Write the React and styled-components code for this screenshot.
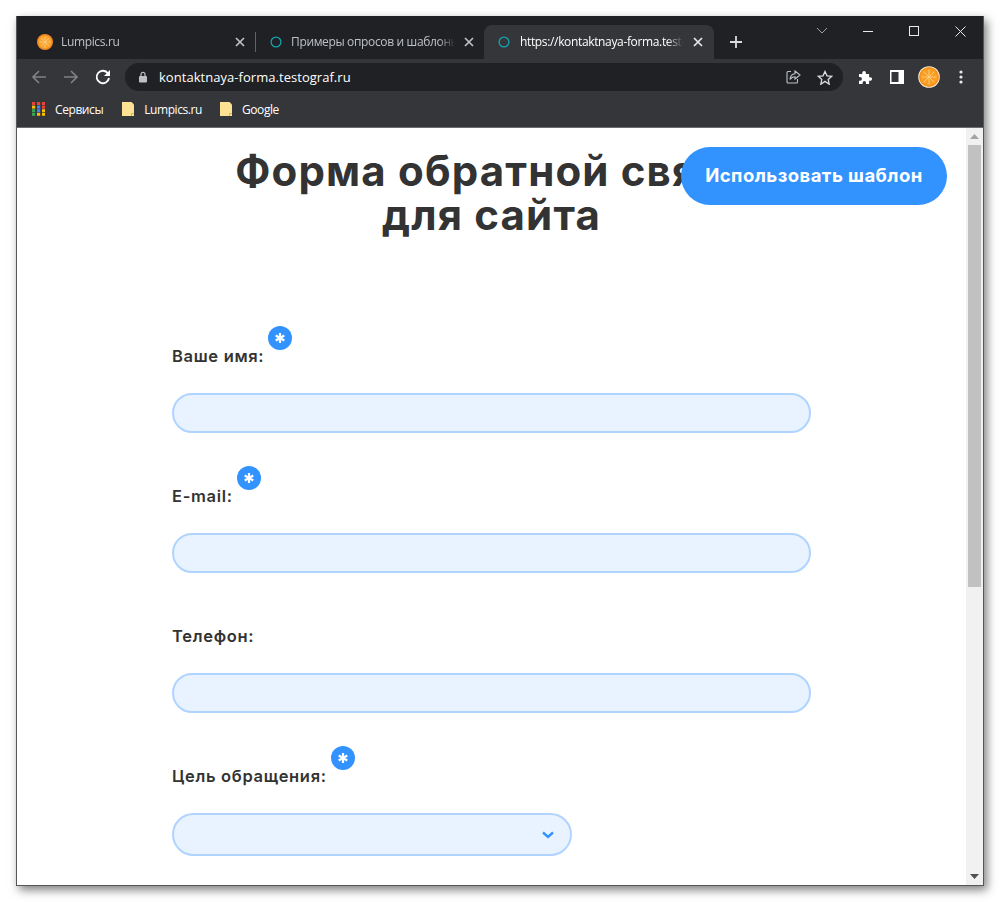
import React from "react";
import styled, { createGlobalStyle } from "styled-components";

const Global = createGlobalStyle`
  html, body { margin: 0; padding: 0; background: #fff; }
  body { height: 902px; overflow: hidden; font-family: "Open Sans", "Liberation Sans", sans-serif; }
  * { box-sizing: border-box; }
`;

const Desk = styled.div`
  width: 1000px;
  height: 902px;
  padding: 16px 16px 16px 16px;
`;
const Win = styled.div`
  width: 968px;
  height: 870px;
  display: flex;
  flex-direction: column;
  background: #fff;
  overflow: hidden;
  border: 1px solid #55565a;
  border-top: 0;
  box-shadow: 3px 4px 9px rgba(0, 0, 0, 0.5);
`;
const TabStrip = styled.div`
  height: 43px;
  flex: none;
  background: #202124;
  display: flex;
  align-items: flex-end;
  padding-left: 8px;
  position: relative;
`;
const Tab = styled.div`
  width: ${p => p.$w}px;
  height: 34px;
  display: flex;
  align-items: center;
  gap: ${p => p.$gap || 8}px;
  padding: 0 ${p => p.$pr}px 0 ${p => p.$pl}px;
  border-radius: 8px 8px 0 0;
  background: ${p => (p.$active ? "#35363a" : "transparent")};
  color: ${p => (p.$active ? "#fff" : "#bdc1c6")};
`;
const TabDivider = styled.div`
  width: 1px;
  height: 20px;
  background: #5f6368;
  margin-bottom: 7px;
  flex: none;
`;
const TabTitle = styled.div`
  flex: 1;
  min-width: 0;
  font-size: 12px;
  line-height: 16px;
  letter-spacing: -0.35px;
  white-space: nowrap;
  overflow: hidden;
  -webkit-mask-image: linear-gradient(to right, #000 calc(100% - 16px), transparent);
  mask-image: linear-gradient(to right, #000 calc(100% - 16px), transparent);
`;
const Close = styled.svg`
  width: 10px;
  height: 10px;
  flex: none;
  stroke: ${p => (p.$active ? "#e8eaed" : "#bdc1c6")};
  stroke-width: 1.7;
`;
const NewTab = styled.svg`
  width: 14px;
  height: 14px;
  margin: 0 0 10px 15px;
  stroke: #dadce0;
  stroke-width: 1.8;
  flex: none;
`;
const WinControls = styled.div`
  position: absolute;
  right: 0;
  top: 0;
  display: flex;
`;
const WinBtn = styled.div`
  width: 46px;
  height: 30px;
  display: flex;
  align-items: center;
  justify-content: center;
  svg { stroke: #e8eaed; fill: none; stroke-width: 1; }
`;
const Toolbar = styled.div`
  height: 37px;
  flex: none;
  background: #35363a;
  display: flex;
  align-items: flex-start;
  padding-top: 4px;
`;
const NavBtn = styled.div`
  width: 32px;
  height: 28px;
  flex: none;
  display: flex;
  align-items: center;
  justify-content: center;
`;
const NavGroup = styled.div`
  display: flex;
  padding-left: 6px;
  margin-right: 6px;
`;
const Omni = styled.div`
  width: 718px;
  height: 28px;
  flex: none;
  border-radius: 14px;
  background: #202124;
  display: flex;
  align-items: center;
  padding: 0 2px 0 13px;
`;
const UrlText = styled.div`
  flex: 1;
  margin-left: 11px;
  font-size: 13px;
  color: #fff;
  letter-spacing: 0.04px;
`;
const OmniBtn = styled.div`
  width: 32px;
  height: 28px;
  display: flex;
  align-items: center;
  justify-content: center;
`;
const ToolRight = styled.div`
  display: flex;
  margin-left: 6px;
`;
const Bookmarks = styled.div`
  height: 31px;
  flex: none;
  background: #35363a;
  display: flex;
  align-items: center;
  padding: 0 0 5px 15px;
`;
const Bookmark = styled.div`
  display: flex;
  align-items: center;
  gap: ${p => p.$gap}px;
  margin-right: ${p => p.$mr}px;
  font-size: 12px;
  letter-spacing: -0.42px;
  color: #fff;
`;
const Rule = styled.div`
  height: 1px;
  flex: none;
  background: #6b6c70;
`;
const Viewport = styled.div`
  flex: 1;
  min-height: 0;
  display: flex;
  position: relative;
`;
const Page = styled.div`
  flex: 1;
  min-width: 0;
  overflow: hidden;
  font-family: Inter, "Liberation Sans", sans-serif;
`;
const Title = styled.h1`
  margin: 0;
  padding-top: 21px;
  text-align: center;
  font-size: 42px;
  line-height: 44px;
  font-weight: 700;
  letter-spacing: 1.15px;
  color: #333333;
  white-space: pre-line;
`;
const Form = styled.div`
  padding: 88px 0 0 155px;
`;
const Field = styled.div`
  height: 140px;
  display: flex;
  flex-direction: column;
`;
const LabelRow = styled.div`
  height: 68px;
  padding-top: 6px;
  display: flex;
  align-items: flex-start;
`;
const Label = styled.div`
  margin-top: 15px;
  font-size: 16.5px;
  line-height: 20px;
  font-weight: 600;
  letter-spacing: 0.68px;
  color: #333333;
`;
const Badge = styled.div`
  width: 24px;
  height: 24px;
  margin: -5px 0 0 4px;
  border-radius: 50%;
  background: #3293ff;
  display: flex;
  align-items: center;
  justify-content: center;
`;
const Input = styled.div`
  width: 639px;
  height: 40px;
  border: 2px solid #b0d4ff;
  border-radius: 20px;
  background: #e8f3ff;
`;
const Select = styled.div`
  width: 400px;
  height: 43px;
  border: 2px solid #b0d4ff;
  border-radius: 21.5px;
  background: #e8f3ff;
  display: flex;
  align-items: center;
  justify-content: flex-end;
  padding-right: 16px;
`;
const UseBtn = styled.div`
  position: absolute;
  left: 664px;
  top: 19px;
  width: 266px;
  height: 58px;
  border-radius: 29px;
  background: #3293ff;
  color: #fff;
  display: flex;
  align-items: center;
  justify-content: center;
  padding-bottom: 2px;
  font-family: Inter, "Liberation Sans", sans-serif;
  font-size: 18.5px;
  font-weight: 700;
  letter-spacing: 0.45px;
`;
const Scrollbar = styled.div`
  width: 17px;
  flex: none;
  background: #f1f1f1;
  display: flex;
  flex-direction: column;
  align-items: center;
`;
const ScrollArrow = styled.div`
  height: 17px;
  width: 100%;
  flex: none;
  display: flex;
  align-items: center;
  justify-content: center;
`;
const ScrollThumb = styled.div`
  width: 13px;
  height: 442px;
  flex: none;
  background: #c1c1c1;
`;
const ScrollSpace = styled.div`
  flex: 1;
`;

const Orange = ({ size = 16 }) => (
  <svg width={size} height={size} viewBox="0 0 16 16" style={{ flex: "none" }}>
    <circle cx="8" cy="8" r="8" fill="#f08a24" />
    <circle cx="8" cy="8" r="6.500" fill="#fba42e" />
    <g stroke="#fcca7e" strokeWidth=".9">
      <path d="M8 2.500v11M2.500 8h11M4.100 4.100l7.800 7.800M11.900 4.100l-7.800 7.800" />
    </g>
  </svg>
);
const Ring = () => (
  <svg width="12" height="12" viewBox="0 0 12 12" style={{ flex: "none" }}>
    <circle cx="6" cy="6" r="4.900" fill="none" stroke="#14a3b0" strokeWidth="1.300" />
  </svg>
);
const X = ({ active }) => (
  <Close $active={active} viewBox="0 0 10 10"><path d="M1 1l8 8M9 1l-8 8" /></Close>
);
const Folder = () => (
  <svg width="12" height="14" viewBox="0 0 12 14">
    <path d="M0 0h9.500l2.500 2.500V14H0z" fill="#fde293" />
    <path d="M9.500 14v-2.500H12" fill="none" stroke="#d9b44a" strokeWidth="1" />
  </svg>
);
const AppsGrid = () => (
  <svg width="13" height="14" viewBox="0 0 13 14">
    {[
      ["#ea4335", "#ea4335", "#ea4335"],
      ["#fbbc04", "#4285f4", "#ea4335"],
      ["#34a853", "#4285f4", "#fbbc04"],
      ["#34a853", "#fbbc04", "#fbbc04"],
    ].map((r, y) =>
      r.map((c, x) => <rect key={`${x}-${y}`} x={x * 5} y={y * 3.6} width="3.200" height="3" fill={c} />)
    )}
  </svg>
);
const Star = () => (
  <svg width="12" height="12" viewBox="0 0 12 12">
    <path d="M6 1v10M1.700 3.500l8.600 5M10.300 3.500l-8.600 5" stroke="#fff" strokeWidth="2.200" />
  </svg>
);

const fields = [
  { label: "Ваше имя:", req: true },
  { label: "E-mail:", req: true },
  { label: "Телефон:" },
  { label: "Цель обращения:", req: true, select: true },
];

export default function App() {
  return (
    <Desk>
      <Global />
      <Win>
        <TabStrip>
          <Tab $w={230} $pl={12} $pr={10}>
            <Orange />
            <TabTitle>Lumpics.ru</TabTitle>
            <X />
          </Tab>
          <TabDivider />
          <Tab $w={228} $pl={14} $pr={10} $gap={9}>
            <Ring />
            <TabTitle>Примеры опросов и шаблоны анкет</TabTitle>
            <X />
          </Tab>
          <Tab $w={230} $pl={14} $pr={11} $gap={10} $active>
            <Ring />
            <TabTitle>https://kontaktnaya-forma.testograf.ru</TabTitle>
            <X active />
          </Tab>
          <NewTab viewBox="0 0 14 14"><path d="M7 1v12M1 7h12" /></NewTab>
          <WinControls>
            <WinBtn>
              <svg width="12" height="8" viewBox="0 0 12 8" style={{ stroke: "#9aa0a6" }}><path d="M1 1l5 5 5-5" /></svg>
            </WinBtn>
            <WinBtn><svg width="10" height="10" viewBox="0 0 10 10"><path d="M0 5.500h10" /></svg></WinBtn>
            <WinBtn><svg width="10" height="10" viewBox="0 0 10 10"><rect x=".5" y=".5" width="9" height="9" /></svg></WinBtn>
            <WinBtn><svg width="11" height="11" viewBox="0 0 11 11"><path d="M.5.5l10 10M10.500.5l-10 10" /></svg></WinBtn>
          </WinControls>
        </TabStrip>
        <Toolbar>
          <NavGroup>
            <NavBtn>
              <svg width="16" height="16" viewBox="0 0 16 16" fill="none" stroke="#7f8184" strokeWidth="1.700"><path d="M15 8H2M8 2L2 8l6 6" /></svg>
            </NavBtn>
            <NavBtn>
              <svg width="16" height="16" viewBox="0 0 16 16" fill="none" stroke="#7f8184" strokeWidth="1.700"><path d="M1 8h13M8 2l6 6-6 6" /></svg>
            </NavBtn>
            <NavBtn>
              <svg width="16" height="16" viewBox="0 0 16 16" fill="none"><path d="M13 4.500A6.200 6.200 0 1 0 14 9" stroke="#fff" strokeWidth="1.900" /><path d="M15 1v6H9z" fill="#fff" /></svg>
            </NavBtn>
          </NavGroup>
          <Omni>
            <svg width="10" height="12" viewBox="0 0 10 12" style={{ flex: "none" }}>
              <rect x="1" y="5" width="8" height="6.500" rx="1" fill="#bdc1c6" />
              <path d="M3 5V3.400a2 2 0 0 1 4 0V5" fill="none" stroke="#bdc1c6" strokeWidth="1.200" />
            </svg>
            <UrlText>kontaktnaya-forma.testograf.ru</UrlText>
            <OmniBtn>
              <svg width="15" height="14" viewBox="0 0 15 14" fill="none" stroke="#bdc1c6" strokeWidth="1.100"><path d="M5 1.500H2a1 1 0 0 0-1 1v9.500a1 1 0 0 0 1 1h8.500a1 1 0 0 0 1-1V9" /><path d="M9 1l5 4-5 4V6.700C6.800 6.700 5.200 7.500 4 9.500c.2-3 2-5.500 5-5.800z" /></svg>
            </OmniBtn>
            <OmniBtn>
              <svg width="16" height="15" viewBox="0 0 16 15" fill="none" stroke="#dadce0" strokeWidth="1.300"><path d="M8 1.400l2 4.400 4.700.5-3.500 3.200 1 4.700L8 11.400l-4.200 2.800 1-4.700L1.300 6.300 6 5.800z" /></svg>
            </OmniBtn>
          </Omni>
          <ToolRight>
            <NavBtn>
              <svg width="15" height="15" viewBox="0 0 15 15" fill="#fff"><path d="M1 4h3.300V2.800a1.800 1.800 0 0 1 3.600 0V4h3.200v3.200h1.200a1.800 1.800 0 0 1 0 3.600h-1.200V14H8v-1.300a1.700 1.700 0 0 0-3.400 0V14H1v-3.300h1.100a1.800 1.800 0 0 0 0-3.600H1z" /></svg>
            </NavBtn>
            <NavBtn>
              <svg width="14" height="14" viewBox="0 0 14 14"><rect width="14" height="14" fill="#fff" /><rect x="1.500" y="2" width="7" height="10" fill="#35363a" /></svg>
            </NavBtn>
            <NavBtn>
              <svg width="22" height="22" viewBox="0 0 22 22">
                <circle cx="11" cy="11" r="10.800" fill="#fff2dc" />
                <circle cx="11" cy="11" r="10" fill="#f5901c" />
                <circle cx="11" cy="11" r="8.400" fill="#fb9f22" />
                <g stroke="#fdd08a" strokeWidth=".9"><path d="M11 3.500v15M3.500 11h15M5.700 5.700l10.600 10.600M16.300 5.700L5.700 16.300" /></g>
              </svg>
            </NavBtn>
            <NavBtn>
              <svg width="4" height="14" viewBox="0 0 4 14" fill="#e8eaed"><circle cx="2" cy="2" r="1.600" /><circle cx="2" cy="7" r="1.600" /><circle cx="2" cy="12" r="1.600" /></svg>
            </NavBtn>
          </ToolRight>
        </Toolbar>
        <Bookmarks>
          <Bookmark $gap={10} $mr={19}><AppsGrid />Сервисы</Bookmark>
          <Bookmark $gap={10} $mr={18}><Folder />Lumpics.ru</Bookmark>
          <Bookmark $gap={10} $mr={0}><Folder />Google</Bookmark>
        </Bookmarks>
        <Rule />
        <Viewport>
          <Page>
            <Title>{"Форма обратной связи\nдля сайта"}</Title>
            <Form>
              {fields.map(f => (
                <Field key={f.label}>
                  <LabelRow>
                    <Label>{f.label}</Label>
                    {f.req && <Badge><Star /></Badge>}
                  </LabelRow>
                  {f.select ? (
                    <Select>
                      <svg width="12" height="8" viewBox="0 0 12 8" fill="none" stroke="#3293ff" strokeWidth="2.400"><path d="M1 1.500l5 4.500 5-4.500" /></svg>
                    </Select>
                  ) : (
                    <Input />
                  )}
                </Field>
              ))}
            </Form>
          </Page>
          <UseBtn>Использовать шаблон</UseBtn>
          <Scrollbar>
            <ScrollArrow>
              <svg width="9" height="5" viewBox="0 0 9 5"><path d="M4.500 0L9 5H0z" fill="#a3a3a3" /></svg>
            </ScrollArrow>
            <ScrollThumb />
            <ScrollSpace />
            <ScrollArrow>
              <svg width="9" height="5" viewBox="0 0 9 5"><path d="M0 0h9L4.500 5z" fill="#505050" /></svg>
            </ScrollArrow>
          </Scrollbar>
        </Viewport>
      </Win>
    </Desk>
  );
}
